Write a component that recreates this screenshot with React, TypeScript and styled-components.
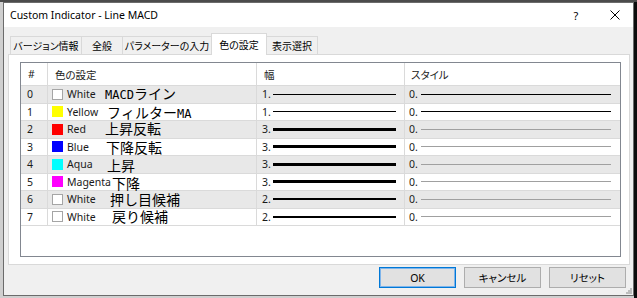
import React from "react";
import styled, { createGlobalStyle } from "styled-components";

const GlobalStyle = createGlobalStyle`
  html, body {
    margin: 0;
    padding: 0;
  }
  body {
    width: 637px;
    height: 298px;
    overflow: hidden;
    font-family: "Noto Sans", "Noto Sans CJK JP", sans-serif;
    background:
      linear-gradient(#4b4b4b, #4b4b4b) top left / 100% 2px no-repeat,
      linear-gradient(to right, #cfcfcf 0, #cfcfcf 634px, #0c0c0c 634px);
  }
`;

const Desktop = styled.div`
  padding: 2px 0 0 3px;
`;

const Window = styled.div`
  position: relative;
  width: 631px;
  height: 294px;
  box-sizing: border-box;
  border: 1px solid #6b6b6b;
  background: #f0f0f0;
  display: flex;
  flex-direction: column;
`;

const TitleBar = styled.div`
  height: 24px;
  background: #fff;
  display: flex;
  align-items: center;
  padding-left: 6px;
`;

const Title = styled.span`
  flex: 1;
  font-size: 10.5px;
  color: #000;
`;

const CaptionButton = styled.div<{ $w: number }>`
  width: ${(p) => p.$w}px;
  height: 24px;
  display: flex;
  align-items: center;
  justify-content: center;
  font-size: 11px;
  color: #000;
`;

const Body = styled.div`
  flex: 1;
  display: flex;
  flex-direction: column;
  padding: 6px 3px 7px 4px;
`;

const TabRow = styled.div`
  position: relative;
  z-index: 1;
  height: 22px;
  margin: 0 0 -1px 2px;
  display: flex;
  align-items: flex-end;
`;

const Tab = styled.div<{ $w: number; $active?: boolean }>`
  width: ${(p) => p.$w}px;
  height: ${(p) => (p.$active ? 22 : 18)}px;
  margin-bottom: ${(p) => (p.$active ? 0 : 1)}px;
  margin-right: -1px;
  box-sizing: border-box;
  border: 1px solid #d9d9d9;
  border-bottom: none;
  background: ${(p) => (p.$active ? "#fff" : "#f0f0f0")};
  display: flex;
  align-items: center;
  justify-content: center;
  font-family: "Noto Sans CJK JP", sans-serif;
  font-feature-settings: "palt";
  font-size: 10px;
  color: #000;
  white-space: nowrap;
`;

const Panel = styled.div`
  height: 211px;
  box-sizing: border-box;
  border: 1px solid #d9d9d9;
  background: #fff;
  padding: 7px 8px 7px 11px;
`;

const ListBox = styled.div`
  height: 195px;
  box-sizing: border-box;
  border: 1px solid #828790;
  background: #fff;
  display: flex;
  flex-direction: column;
`;

const Row = styled.div<{ $h: number; $shade?: boolean }>`
  display: grid;
  grid-template-columns: 27px 209px 148px 1fr;
  height: ${(p) => p.$h}px;
  box-sizing: border-box;
  border-bottom: 1px solid #dadada;
  background: ${(p) => (p.$shade ? "#e8e8e8" : "#fff")};
  font-size: 10.5px;
  color: #1a1a1a;
`;

const Cell = styled.div<{ $pl: number; $last?: boolean }>`
  display: flex;
  align-items: center;
  padding-left: ${(p) => p.$pl}px;
  border-right: ${(p) => (p.$last ? "none" : "1px solid #dadada")};
  white-space: nowrap;
  min-width: 0;
`;

const HeadText = styled.span`
  font-family: "Noto Sans", "Noto Sans CJK JP", sans-serif;
  font-feature-settings: "palt";
  color: #222;
`;

const Swatch = styled.span<{ $color: string }>`
  width: 11px;
  height: 11px;
  box-sizing: border-box;
  flex-shrink: 0;
  background: ${(p) => p.$color};
  border: 1px solid ${(p) => (p.$color === "#ffffff" ? "#a5a5a5" : p.$color)};
  margin-right: 4px;
`;

const ColorName = styled.span`
  width: 38px;
  flex-shrink: 0;
  overflow: visible;
`;

/* hand-written note beside each colour, in a gothic with half-width latin */
const Label = styled.span<{ $dx: number; $dy: number }>`
  margin-left: ${(p) => p.$dx}px;
  transform: translateY(${(p) => p.$dy}px);
  font-family: "DejaVu Sans Mono", "Noto Sans Mono CJK JP", "Noto Sans CJK JP", monospace;
  font-size: 14px;
  color: #000;
  line-height: 1;
`;

const Half = styled.span`
  font-size: 12px;
`;

const Value = styled.span<{ $w: number }>`
  width: ${(p) => p.$w}px;
  flex-shrink: 0;
`;

const Stroke = styled.span<{ $w: number; $t: number; $c: string }>`
  width: ${(p) => p.$w}px;
  height: ${(p) => p.$t}px;
  background: ${(p) => p.$c};
  flex-shrink: 0;
`;

const ButtonBar = styled.div`
  margin-top: 2px;
  padding-right: 4px;
  display: flex;
  justify-content: flex-end;
  gap: 8px;
`;

const Button = styled.div<{ $default?: boolean }>`
  width: 77px;
  height: 21px;
  box-sizing: border-box;
  background: #e1e1e1;
  border: 1px solid ${(p) => (p.$default ? "#0078d7" : "#adadad")};
  box-shadow: ${(p) => (p.$default ? "inset 0 0 0 1px #7eb4ea" : "none")};
  display: flex;
  align-items: center;
  justify-content: center;
  font-family: "Noto Sans", "Noto Sans CJK JP", sans-serif;
  font-feature-settings: "palt";
  font-size: 10.5px;
  color: #000;
`;

const Grip = styled.svg`
  position: absolute;
  right: 1px;
  bottom: 1px;
`;

const tabs = [
  { label: "バージョン情報", w: 72 },
  { label: "全般", w: 42 },
  { label: "パラメーターの入力", w: 90 },
  { label: "色の設定", w: 56, active: true },
  { label: "表示選択", w: 52 },
];

const rows = [
  { color: "#ffffff", name: "White", label: "MACDライン", dx: 0, dy: 0, width: 1, style: "#000" },
  { color: "#ffff00", name: "Yellow", label: "フィルターMA", dx: 2, dy: 1, width: 1, style: "#000" },
  { color: "#ff0000", name: "Red", label: "上昇反転", dx: 0, dy: 0, width: 3, style: "#a0a0a0" },
  { color: "#0000ff", name: "Blue", label: "下降反転", dx: 1, dy: 1, width: 3, style: "#a0a0a0" },
  { color: "#00ffff", name: "Aqua", label: "上昇", dx: 2, dy: 2, width: 3, style: "#a0a0a0" },
  { color: "#ff00ff", name: "Magenta", label: "下降", dx: 7, dy: 2, width: 3, style: "#a0a0a0" },
  { color: "#ffffff", name: "White", label: "押し目候補", dx: 5, dy: 1, width: 2, style: "#a0a0a0" },
  { color: "#ffffff", name: "White", label: "戻り候補", dx: 7, dy: 0, width: 2, style: "#a0a0a0" },
];

// latin runs get the half-width size
const renderLabel = (text: string) =>
  text.split(/([A-Za-z]+)/).map((part, i) =>
    /^[A-Za-z]+$/.test(part) ? <Half key={i}>{part}</Half> : part
  );

const App = () => {
  return (
    <>
      <GlobalStyle />
      <Desktop>
        <Window>
          <TitleBar>
            <Title>Custom Indicator - Line MACD</Title>
            <CaptionButton $w={42}>?</CaptionButton>
            <CaptionButton $w={36}>
              <svg width="10" height="10" viewBox="0 0 10 10">
                <path d="M0.5 0.5 L9.5 9.5 M9.5 0.5 L0.5 9.5" stroke="#000" strokeWidth="1" />
              </svg>
            </CaptionButton>
          </TitleBar>
          <Body>
            <TabRow>
              {tabs.map((t) => (
                <Tab key={t.label} $w={t.w} $active={t.active}>
                  {t.label}
                </Tab>
              ))}
            </TabRow>
            <Panel>
              <ListBox>
                <Row $h={23}>
                  <Cell $pl={7}>
                    <HeadText>#</HeadText>
                  </Cell>
                  <Cell $pl={7}>
                    <HeadText>色の設定</HeadText>
                  </Cell>
                  <Cell $pl={7}>
                    <HeadText>幅</HeadText>
                  </Cell>
                  <Cell $pl={6} $last>
                    <HeadText>スタイル</HeadText>
                  </Cell>
                </Row>
                {rows.map((r, i) => (
                  <Row key={i} $h={17.5} $shade={i % 2 === 0}>
                    <Cell $pl={6}>{i}</Cell>
                    <Cell $pl={4}>
                      <Swatch $color={r.color} />
                      <ColorName>{r.name}</ColorName>
                      <Label $dx={r.dx} $dy={r.dy}>
                        {renderLabel(r.label)}
                      </Label>
                    </Cell>
                    <Cell $pl={5}>
                      <Value $w={11}>{r.width}.</Value>
                      <Stroke $w={123} $t={r.width} $c="#000" />
                    </Cell>
                    <Cell $pl={4} $last>
                      <Value $w={12}>0.</Value>
                      <Stroke $w={190} $t={1} $c={r.style} />
                    </Cell>
                  </Row>
                ))}
              </ListBox>
            </Panel>
            <ButtonBar>
              <Button $default>OK</Button>
              <Button>キャンセル</Button>
              <Button>リセット</Button>
            </ButtonBar>
          </Body>
          <Grip width="6" height="6" viewBox="0 0 6 6">
            <rect x="4" y="0" width="2" height="2" fill="#bdbdbd" />
            <rect x="2" y="2" width="2" height="2" fill="#bdbdbd" />
            <rect x="4" y="2" width="2" height="2" fill="#bdbdbd" />
            <rect x="0" y="4" width="2" height="2" fill="#bdbdbd" />
            <rect x="2" y="4" width="2" height="2" fill="#bdbdbd" />
            <rect x="4" y="4" width="2" height="2" fill="#bdbdbd" />
          </Grip>
        </Window>
      </Desktop>
    </>
  );
};

export default App;
